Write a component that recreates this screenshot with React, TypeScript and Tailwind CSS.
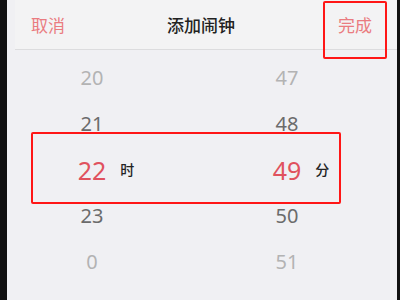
const HOURS = ['20', '21', '22', '23', '0']
const MINUTES = ['47', '48', '49', '50', '51']

// distance from the selected row -> text colour
const tone = ['text-[#e0525e]', 'text-[#6b6b6b]', 'text-[#b3b3b3]']

function Cell({ value, unit, dist, width }: { value: string; unit: string; dist: number; width: string }) {
  const selected = dist === 0
  return (
    <div className={`flex justify-center ${width}`}>
      <span className={`relative leading-none ${tone[dist]} ${selected ? 'text-[25px]' : 'text-[20px]'}`}>
        {value}
        {selected && (
          <span className="absolute left-full top-1/2 ml-[14px] -translate-y-1/2 whitespace-nowrap text-[14px] font-medium text-[#222]">
            {unit}
          </span>
        )}
      </span>
    </div>
  )
}

export default function App() {
  return (
    <div
      className="relative flex h-[300px] w-[400px] overflow-hidden bg-[#111]"
      style={{ fontFamily: '"Noto Sans", "Noto Sans CJK SC", sans-serif' }}
    >
      <div className="ml-[7px] mr-[4px] flex flex-1 flex-col bg-[#f0f0f3]">
        {/* Header */}
        <div className="ml-[8px] flex h-[50px] shrink-0 items-center border-b border-[#dcdcde] bg-[#f3f3f4] pt-[2px] text-[17px]">
          <span className="ml-[16px] text-[#ea7b80]">取消</span>
          <span className="ml-[102px] font-medium text-[#222]">添加闹钟</span>
          <span className="ml-[103px] text-[#ea7b80]">完成</span>
        </div>

        {/* Picker rows */}
        <div className="flex flex-col pt-[5px]">
          {HOURS.map((h, i) => {
            const dist = Math.abs(i - 2)
            return (
              <div key={h} className="flex h-[46px] items-center">
                <Cell value={h} unit="时" dist={dist} width="w-[170px]" />
                <Cell value={MINUTES[i]} unit="分" dist={dist} width="w-[220px]" />
              </div>
            )
          })}
        </div>
      </div>

      {/* Annotation boxes */}
      <div className="absolute left-[323px] top-[1px] h-[58px] w-[64px] rounded-[2px] border-2 border-[#ff1616]" />
      <div className="absolute left-[31px] top-[132px] h-[72px] w-[310px] rounded-[2px] border-2 border-[#ff1616]" />
    </div>
  )
}
